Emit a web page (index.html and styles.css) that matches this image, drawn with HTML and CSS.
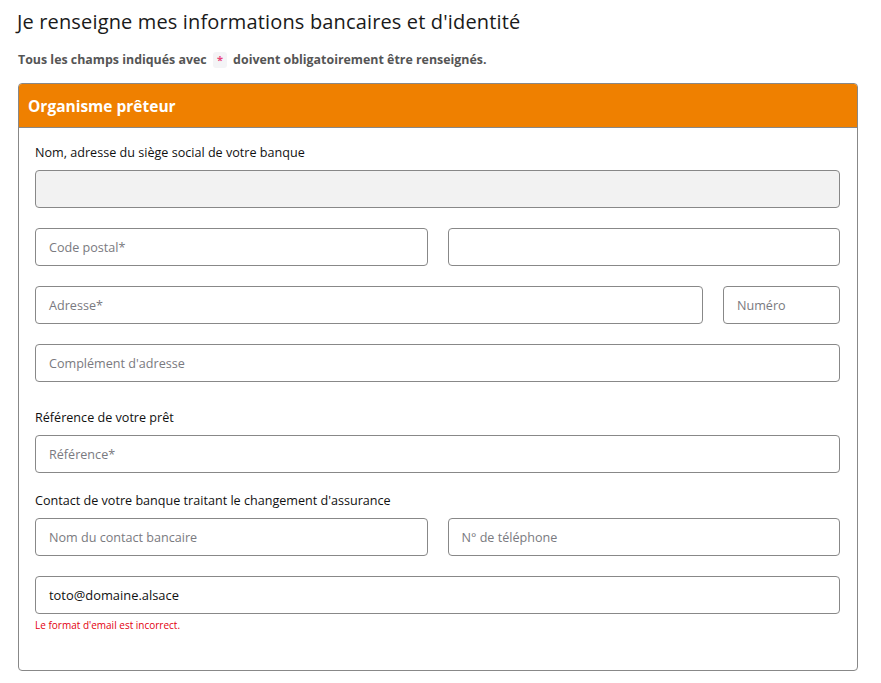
FILE: index.html
```html
<!DOCTYPE html>
<html lang="fr">
<head>
<meta charset="utf-8">
<link rel="stylesheet" href="styles.css">
</head>
<body>
<div class="page">
  <h1 class="title">Je renseigne mes informations bancaires et d'identité</h1>
  <p class="notice">Tous les champs indiqués avec <span class="star">*</span> doivent obligatoirement être renseignés.</p>
  <section class="card">
    <header class="card-head">Organisme prêteur</header>
    <div class="card-body">
      <div class="label">Nom, adresse du siège social de votre banque</div>
      <div class="field disabled"></div>

      <div class="row two">
        <div class="field"><span class="ph">Code postal*</span></div>
        <div class="field"></div>
      </div>

      <div class="row addr">
        <div class="field"><span class="ph">Adresse*</span></div>
        <div class="field"><span class="ph">Numéro</span></div>
      </div>

      <div class="row">
        <div class="field"><span class="ph">Complément d'adresse</span></div>
      </div>

      <div class="label spaced">Référence de votre prêt</div>
      <div class="field"><span class="ph">Référence*</span></div>

      <div class="label spaced-sm">Contact de votre banque traitant le changement d'assurance</div>
      <div class="row two first">
        <div class="field"><span class="ph">Nom du contact bancaire</span></div>
        <div class="field"><span class="ph">N° de téléphone</span></div>
      </div>

      <div class="row">
        <div class="field"><span class="val">toto@domaine.alsace</span></div>
      </div>
      <div class="error">Le format d'email est incorrect.</div>
    </div>
  </section>
</div>
</body>
</html>
```
FILE: styles.css
```css
* { box-sizing: border-box; }
body {
  margin: 0;
  background: #fff;
  font-family: "Open Sans", Lato, sans-serif;
  color: #222;
}
.page {
  width: 840px;
  margin-left: 18px;
}
.title {
  margin: 10px 0 0 -1px;
  font-size: 20px;
  line-height: 24px;
  font-weight: 400;
  letter-spacing: 0.15px;
  color: #1a1a1a;
}
.notice {
  margin: 18px 0 0 0;
  font-size: 12.4px;
  line-height: 16px;
  font-weight: 700;
  color: #555;
}
.star {
  display: inline-block;
  background: #f4f4f6;
  color: #e8457a;
  border-radius: 3px;
  padding: 0 4px;
  margin: 0 3px;
  font-size: 11px;
  line-height: 16px;
}
.card {
  margin-top: 15px;
  border: 1px solid #888;
  border-radius: 4px;
  overflow: hidden;
}
.card-head {
  background: #ef8000;
  color: #fff;
  font-weight: 700;
  font-size: 15.5px;
  height: 44px;
  line-height: 44px;
  padding-left: 9px;
  border-bottom: 1px solid #888;
}
.card-body {
  padding: 17px 17px 38px 16px;
}
.label {
  font-size: 12.6px;
  line-height: 16px;
  color: #111;
  margin-bottom: 9px;
}
.label.spaced { margin-top: 28px; }
.label.spaced-sm { margin-top: 20px; }
.field {
  height: 38px;
  border: 1px solid #888;
  border-radius: 4px;
  background: #fff;
  display: flex;
  align-items: center;
  padding-left: 13px;
  font-size: 12.6px;
}
.field.disabled { background: #f2f2f2; }
.ph { color: #7a7a80; }
.val { color: #111; font-size: 12.9px; }
.row {
  display: grid;
  grid-template-columns: 1fr;
  gap: 20px;
  margin-top: 20px;
}
.row.first { margin-top: 0; }
.row.two { grid-template-columns: 1fr 1fr; }
.row.addr { grid-template-columns: 1fr 117px; }
.error {
  margin-top: 4px;
  font-size: 10px;
  line-height: 14px;
  color: #e3000f;
}
```
